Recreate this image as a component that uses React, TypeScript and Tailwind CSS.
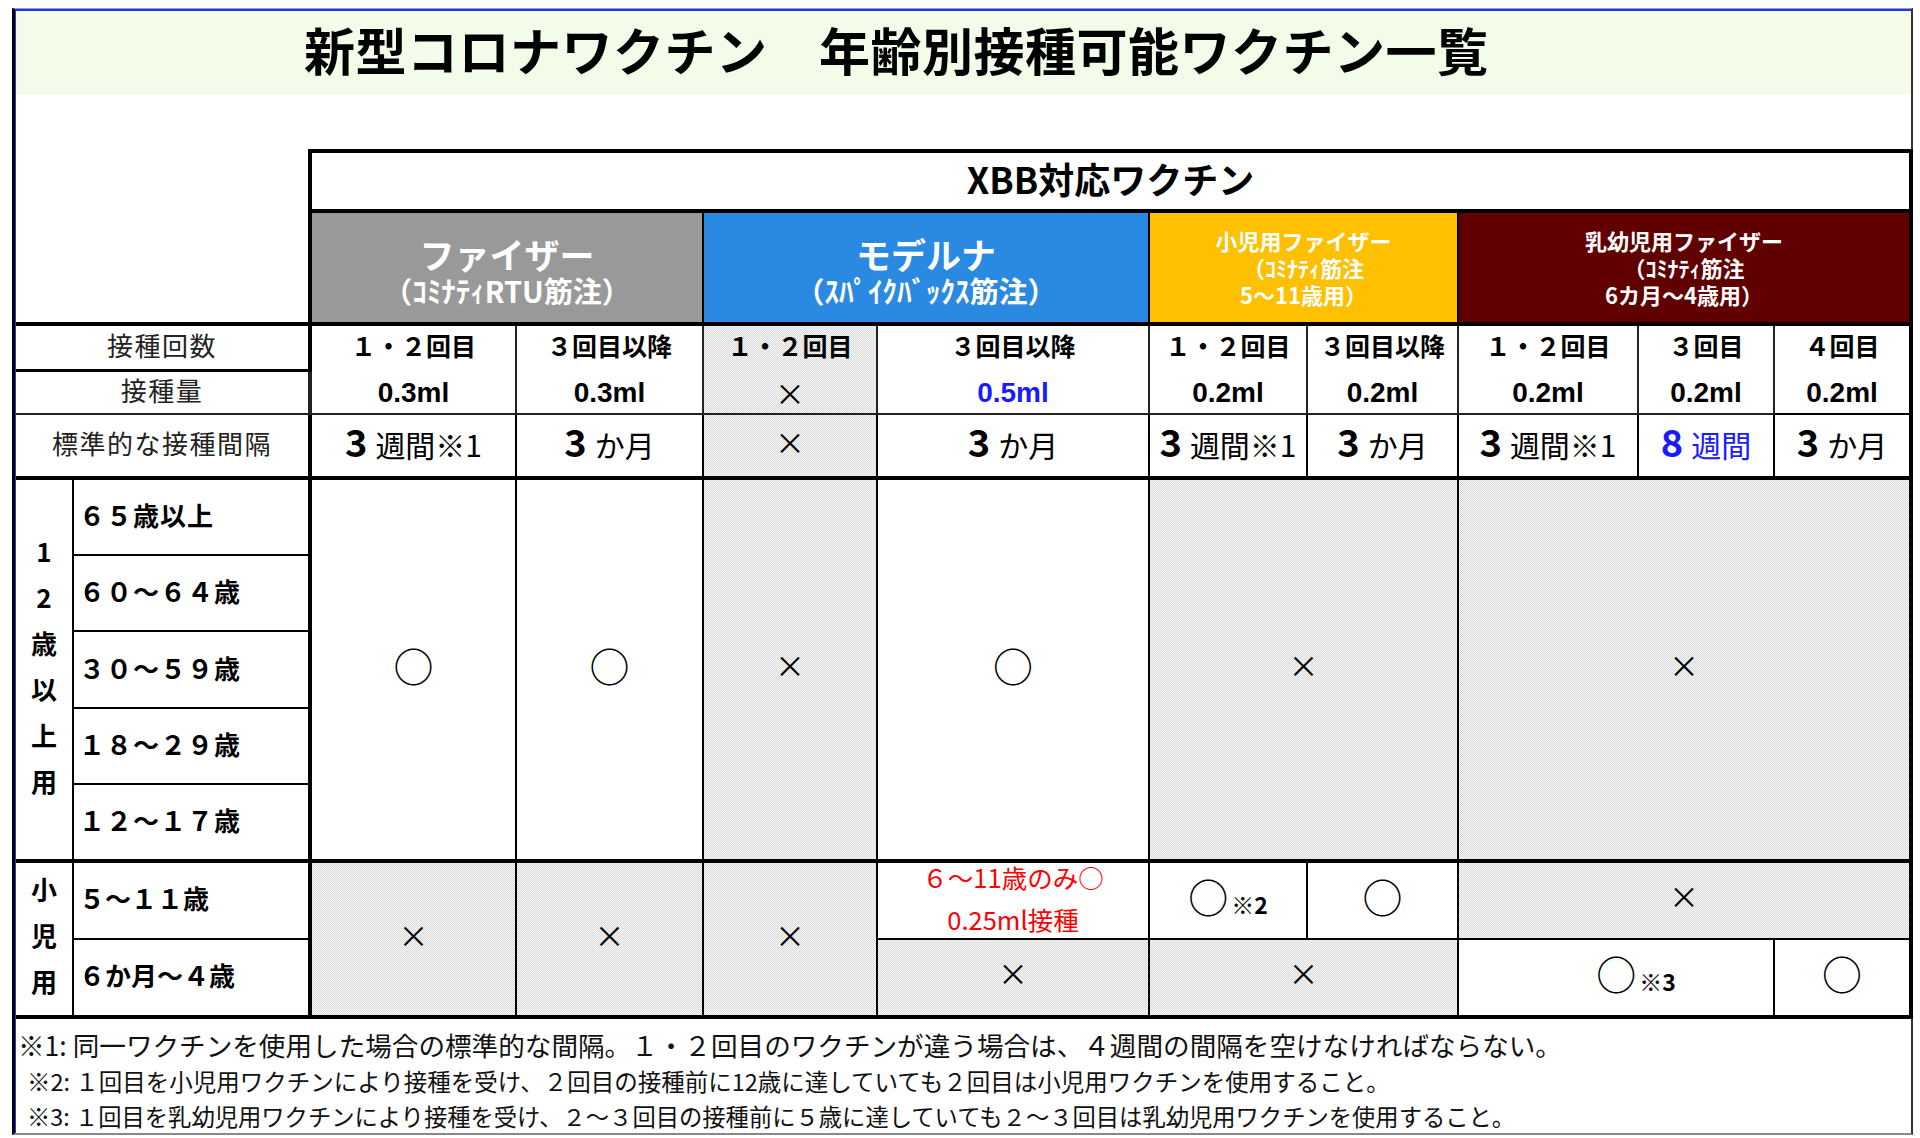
import type { JSX, ReactNode } from 'react';

// Fonts and shared cell looks
const jp = "font-['Noto_Sans_CJK_JP',sans-serif]";
const latin = "font-['Liberation_Sans','Noto_Sans_CJK_JP',sans-serif]";
const dotted =
	'bg-[#ececec] bg-[image:repeating-conic-gradient(#d9d9d9_0%_25%,#f8f8f8_0%_50%)] bg-[length:2px_2px]';

const COLS = [57, 237, 206, 187, 174, 272, 158, 151, 180, 136, 137];

function Maru(): JSX.Element {
	return <span className="text-[40px] leading-none font-normal">○</span>;
}

function Batsu(): JSX.Element {
	return <span className="text-[30px] leading-none font-normal">×</span>;
}

function Interval( { num, unit, blue }: { num: string; unit: string; blue?: boolean } ): JSX.Element {
	return (
		<span className={ `inline-flex items-baseline ${ blue ? 'text-[#1a1aff]' : 'text-black' }` }>
			<span className="text-[38px] font-bold leading-none">{ num }</span>
			<span className="ml-[8px] text-[30px] leading-none">{ unit }</span>
		</span>
	);
}

function Dose( { round, amount, blue }: { round: string; amount: ReactNode; blue?: boolean } ): JSX.Element {
	return (
		<div className="flex flex-col items-center">
			<span className="text-[25px] font-bold leading-none">{ round }</span>
			<span className={ `${ latin } mt-[21px] text-[28px] font-bold leading-none ${ blue ? 'text-[#1a1aff]' : '' }` }>
				{ amount }
			</span>
		</div>
	);
}

function Brand( { lines, big }: { lines: string[]; big?: boolean } ): JSX.Element {
	if ( big ) {
		return (
			<div className="flex flex-col items-center pt-[6px] text-white font-bold">
				<span className="text-[35px] leading-none">{ lines[ 0 ] }</span>
				<span className="mt-[5px] text-[29px] leading-none">{ lines[ 1 ] }</span>
			</div>
		);
	}
	return (
		<div className="flex flex-col items-center text-white font-bold text-[22px] leading-[27px]">
			{ lines.map( ( l ) => (
				<span key={ l }>{ l }</span>
			) ) }
		</div>
	);
}

function Vertical( { text }: { text: string } ): JSX.Element {
	return (
		<div className="flex flex-col items-center pb-[8px] text-[26px] font-bold leading-[46px]">
			{ Array.from( text ).map( ( c, i ) => (
				<span key={ i }>{ c }</span>
			) ) }
		</div>
	);
}

const ages = [ '６５歳以上', '６０～６４歳', '３０～５９歳', '１８～２９歳', '１２～１７歳' ];

export default function App(): JSX.Element {
	return (
		<div className={ `w-[1920px] h-[1138px] bg-white pl-[12px] pt-[8px] text-black ${ jp }` }>
			<div className="w-[1901px] h-[1127px] border-t border-t-[#a0a0a0] border-l-[3px] border-l-black border-r-2 border-r-[#333] border-b-2 border-b-[#888]">
				<div className="h-full border-t-2 border-t-[#2030ff] border-l border-l-[#2030ff]">
					{ /* Title bar */ }
					<div className="flex h-[84px] items-center bg-[#f3fce9] pb-[8px] pl-[288px]">
						<h1 className="text-[51px] font-bold leading-none tracking-[0.5px]">
							新型コロナワクチン　年齢別接種可能ワクチン一覧
						</h1>
					</div>
					<div className="h-[54px]" />

					<table className="w-[1895px] table-fixed">
						<colgroup>
							{ COLS.map( ( w, i ) => (
								<col key={ i } style={ { width: w } } />
							) ) }
						</colgroup>
						<tbody>
							<tr className="h-[60px]">
								<td colSpan={ 2 } rowSpan={ 2 } className="border-r-4 border-b-4 border-black p-0" />
								<td colSpan={ 9 } className="border-4 border-black p-0 pb-[6px] text-center text-[36px] font-bold leading-none">
									XBB対応ワクチン
								</td>
							</tr>
							<tr className="h-[113px]">
								<td colSpan={ 2 } className="border-r-2 border-b-4 border-black bg-[#999999] p-0">
									<Brand big lines={ [ 'ファイザー', '（ｺﾐﾅﾃｨRTU筋注）' ] } />
								</td>
								<td colSpan={ 2 } className="border-r-2 border-b-4 border-black bg-[#2a8ae2] p-0">
									<Brand big lines={ [ 'モデルナ', '（ｽﾊﾟｲｸﾊﾞｯｸｽ筋注）' ] } />
								</td>
								<td colSpan={ 2 } className="border-r-2 border-b-4 border-black bg-[#ffc000] p-0">
									<Brand lines={ [ '小児用ファイザー', '（ｺﾐﾅﾃｨ筋注', '5～11歳用）' ] } />
								</td>
								<td colSpan={ 3 } className="border-r-4 border-b-4 border-black bg-[#600000] p-0">
									<Brand lines={ [ '乳幼児用ファイザー', '（ｺﾐﾅﾃｨ筋注', '6カ月～4歳用）' ] } />
								</td>
							</tr>

							{ /* 接種回数 + 接種量: one visual block in the data columns */ }
							<tr className="h-[46px]">
								<td colSpan={ 2 } className="border-r-4 border-b-[3px] border-black p-0 pb-[4px] text-center text-[26px] leading-none tracking-[1.5px] text-[#222]">
									接種回数
								</td>
								<td rowSpan={ 2 } className="border-r-2 border-b-2 border-[#222] p-0"><Dose round="１・２回目" amount="0.3ml" /></td>
								<td rowSpan={ 2 } className="border-r-2 border-b-2 border-[#222] p-0"><Dose round="３回目以降" amount="0.3ml" /></td>
								<td rowSpan={ 2 } className={ `border-r-2 border-b-2 border-[#222] p-0 ${ dotted }` }>
									<div className="flex flex-col items-center">
										<span className="text-[25px] font-bold leading-none">１・２回目</span>
										<span className="mt-[19px] text-[30px] leading-none">×</span>
									</div>
								</td>
								<td rowSpan={ 2 } className="border-r-2 border-b-2 border-[#222] p-0"><Dose round="３回目以降" amount="0.5ml" blue /></td>
								<td rowSpan={ 2 } className="border-r-2 border-b-2 border-[#222] p-0"><Dose round="１・２回目" amount="0.2ml" /></td>
								<td rowSpan={ 2 } className="border-r-2 border-b-2 border-[#222] p-0"><Dose round="３回目以降" amount="0.2ml" /></td>
								<td rowSpan={ 2 } className="border-r-2 border-b-2 border-[#222] p-0"><Dose round="１・２回目" amount="0.2ml" /></td>
								<td rowSpan={ 2 } className="border-r-2 border-b-2 border-[#222] p-0"><Dose round="３回目" amount="0.2ml" /></td>
								<td rowSpan={ 2 } className="border-r-4 border-b-2 border-black p-0"><Dose round="４回目" amount="0.2ml" /></td>
							</tr>
							<tr className="h-[44px]">
								<td colSpan={ 2 } className="border-r-4 border-b-2 border-[#222] p-0 pb-[4px] text-center text-[26px] leading-none tracking-[1.5px] text-[#222]">
									接種量
								</td>
							</tr>

							<tr className="h-[64px] text-center">
								<td colSpan={ 2 } className="border-r-4 border-b-4 border-black p-0 pb-[5px] text-[26px] leading-none tracking-[1.5px] text-[#222]">
									標準的な接種間隔
								</td>
								<td className="border-r-2 border-b-4 border-black p-0 pb-[7px]"><Interval num="3" unit="週間※1" /></td>
								<td className="border-r-2 border-b-4 border-black p-0 pb-[7px]"><Interval num="3" unit="か月" /></td>
								<td className={ `border-r-2 border-b-4 border-black p-0 pb-[7px] ${ dotted }` }><Batsu /></td>
								<td className="border-r-2 border-b-4 border-black p-0 pb-[7px]"><Interval num="3" unit="か月" /></td>
								<td className="border-r-2 border-b-4 border-black p-0 pb-[7px]"><Interval num="3" unit="週間※1" /></td>
								<td className="border-r-2 border-b-4 border-black p-0 pb-[7px]"><Interval num="3" unit="か月" /></td>
								<td className="border-r-2 border-b-4 border-black p-0 pb-[7px]"><Interval num="3" unit="週間※1" /></td>
								<td className="border-r-2 border-b-4 border-black p-0 pb-[7px]"><Interval num="8" unit="週間" blue /></td>
								<td className="border-r-4 border-b-4 border-black p-0 pb-[7px]"><Interval num="3" unit="か月" /></td>
							</tr>

							{ /* 12歳以上 */ }
							{ ages.map( ( age, i ) => (
								<tr key={ age } className={ i % 2 === 0 ? 'h-[77px]' : 'h-[76px]' }>
									{ i === 0 ? (
										<td rowSpan={ 5 } className="border-r-2 border-b-4 border-black p-0">
											<Vertical text="12歳以上用" />
										</td>
									) : null }
									<td className={ `border-r-4 border-black p-0 pb-[4px] pl-[5px] text-[26px] font-bold leading-none tracking-[1px] ${ i === 4 ? 'border-b-4' : 'border-b-2' }` }>
										{ age }
									</td>
									{ i === 0 ? (
										<>
											<td rowSpan={ 5 } className="border-r-2 border-b-4 border-black p-0 pb-[8px] text-center"><Maru /></td>
											<td rowSpan={ 5 } className="border-r-2 border-b-4 border-black p-0 pb-[8px] text-center"><Maru /></td>
											<td rowSpan={ 5 } className={ `border-r-2 border-b-4 border-black p-0 pb-[8px] text-center ${ dotted }` }><Batsu /></td>
											<td rowSpan={ 5 } className="border-r-2 border-b-4 border-black p-0 pb-[8px] text-center"><Maru /></td>
											<td rowSpan={ 5 } colSpan={ 2 } className={ `border-r-2 border-b-4 border-black p-0 pb-[8px] text-center ${ dotted }` }><Batsu /></td>
											<td rowSpan={ 5 } colSpan={ 3 } className={ `border-r-4 border-b-4 border-black p-0 pb-[8px] text-center ${ dotted }` }><Batsu /></td>
										</>
									) : null }
								</tr>
							) ) }

							{ /* 小児用 */ }
							<tr className="h-[78px]">
								<td rowSpan={ 2 } className="border-r-2 border-b-4 border-black p-0">
									<Vertical text="小児用" />
								</td>
								<td className="border-r-4 border-b-2 border-black p-0 pb-[6px] pl-[5px] text-[26px] font-bold leading-none">５～１１歳</td>
								<td rowSpan={ 2 } className={ `border-r-2 border-b-4 border-black p-0 pb-[8px] text-center ${ dotted }` }><Batsu /></td>
								<td rowSpan={ 2 } className={ `border-r-2 border-b-4 border-black p-0 pb-[8px] text-center ${ dotted }` }><Batsu /></td>
								<td rowSpan={ 2 } className={ `border-r-2 border-b-4 border-black p-0 pb-[8px] text-center ${ dotted }` }><Batsu /></td>
								<td className="border-r-2 border-b-2 border-black p-0 pb-[6px] text-center text-[25.5px] leading-none text-[#ff0000]">
									<div>６～11歳のみ○</div>
									<div className="mt-[16px]">0.25ml接種</div>
								</td>
								<td className="border-r-2 border-b-2 border-black p-0 pb-[8px] text-center">
									<span className="inline-flex items-end">
										<Maru />
										<span className="ml-[3px] text-[23px] font-bold leading-none">※2</span>
									</span>
								</td>
								<td className="border-r-2 border-b-2 border-black p-0 pb-[8px] text-center"><Maru /></td>
								<td colSpan={ 3 } className={ `border-r-4 border-b-2 border-black p-0 pb-[8px] text-center ${ dotted }` }><Batsu /></td>
							</tr>
							<tr className="h-[78px]">
								<td className="border-r-4 border-b-4 border-black p-0 pb-[6px] pl-[5px] text-[26px] font-bold leading-none">６か月～４歳</td>
								<td className={ `border-r-2 border-b-4 border-black p-0 pb-[8px] text-center ${ dotted }` }><Batsu /></td>
								<td colSpan={ 2 } className={ `border-r-2 border-b-4 border-black p-0 pb-[8px] text-center ${ dotted }` }><Batsu /></td>
								<td colSpan={ 2 } className="border-r-2 border-b-4 border-black p-0 pb-[8px] pl-[40px] text-center">
									<span className="inline-flex items-end">
										<Maru />
										<span className="ml-[3px] text-[23px] font-bold leading-none">※3</span>
									</span>
								</td>
								<td className="border-r-4 border-b-4 border-black p-0 pb-[8px] text-center"><Maru /></td>
							</tr>
						</tbody>
					</table>

					{ /* Footnotes */ }
					<div className="pt-[8px] text-[#111]">
						<p className="m-0 pl-[2px] text-[26.6px] leading-[36px]">
							※1: 同一ワクチンを使用した場合の標準的な間隔。１・２回目のワクチンが違う場合は、４週間の間隔を空けなければならない。
						</p>
						<p className="m-0 mt-[1px] pl-[11px] text-[23.5px] leading-[35px]">
							※2: １回目を小児用ワクチンにより接種を受け、２回目の接種前に12歳に達していても２回目は小児用ワクチンを使用すること。
						</p>
						<p className="m-0 pl-[11px] text-[23.3px] leading-[35px]">
							※3: １回目を乳幼児用ワクチンにより接種を受け、２～３回目の接種前に５歳に達していても２～３回目は乳幼児用ワクチンを使用すること。
						</p>
					</div>
				</div>
			</div>
		</div>
	);
}
